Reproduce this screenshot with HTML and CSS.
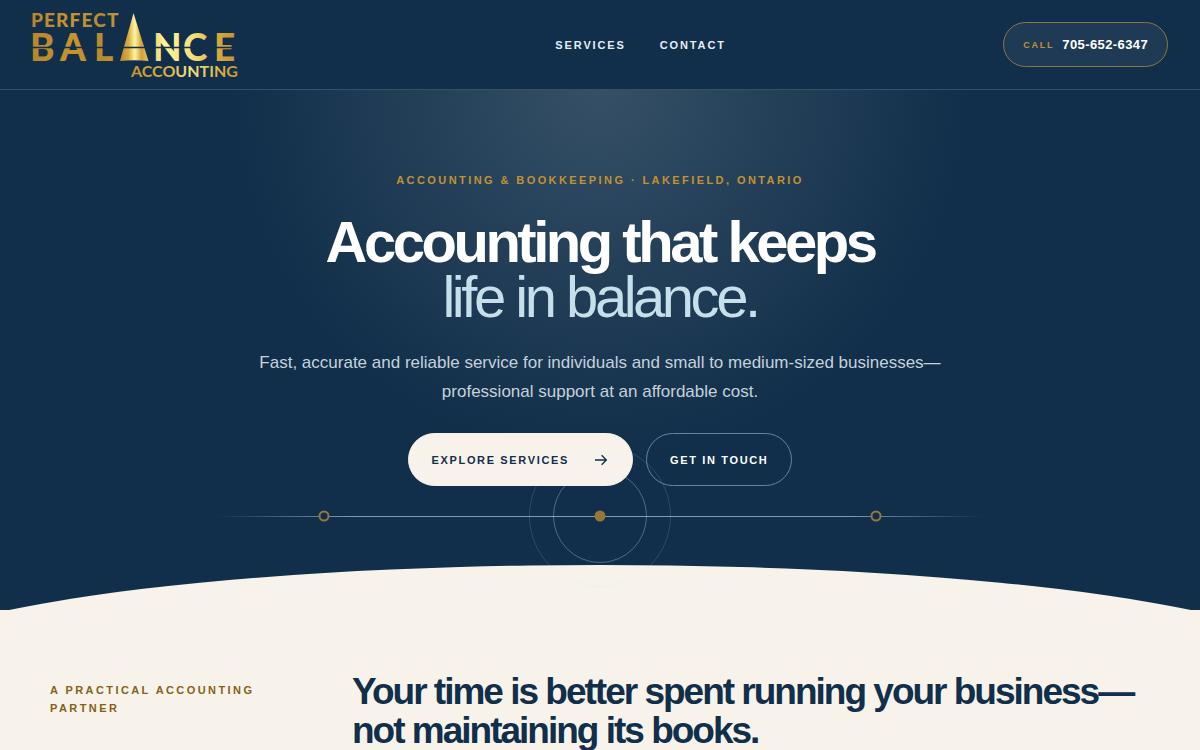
FILE: index.html
```html
<!DOCTYPE html>
<html lang="en">

<head>
    <meta charset="UTF-8">
    <meta name="viewport" content="width=device-width, initial-scale=1.0">
    <title>Perfect Balance Accounting</title>
    <link rel="stylesheet" href="styles.css">
</head>

<body>
    <header class="site-header">
        <a class="brand" href="#top" aria-label="Perfect Balance Accounting">
            <svg class="logo" viewBox="0 0 206 70" width="206" height="70">
                <defs>
                    <linearGradient id="gold" gradientUnits="userSpaceOnUse" x1="0" y1="0" x2="206" y2="0">
                        <stop offset="0" stop-color="#b8862b" />
                        <stop offset="0.2" stop-color="#c6952f" />
                        <stop offset="0.35" stop-color="#b98a2c" />
                        <stop offset="0.55" stop-color="#d9b04a" />
                        <stop offset="0.64" stop-color="#fff59a" />
                        <stop offset="0.78" stop-color="#f3e07c" />
                        <stop offset="0.9" stop-color="#d6a940" />
                        <stop offset="1" stop-color="#c08f2f" />
                    </linearGradient>
                    <linearGradient id="goldSmall" gradientUnits="userSpaceOnUse" x1="99" y1="0" x2="206" y2="0">
                        <stop offset="0" stop-color="#c6952f" />
                        <stop offset="0.35" stop-color="#d9b148" />
                        <stop offset="0.55" stop-color="#f5e37c" />
                        <stop offset="1" stop-color="#c6952f" />
                    </linearGradient>
                    <linearGradient id="peak" x1="0" y1="0" x2="1" y2="0">
                        <stop offset="0" stop-color="#c08a2a" />
                        <stop offset="0.3" stop-color="#d9aa42" />
                        <stop offset="0.52" stop-color="#fff6a0" />
                        <stop offset="0.75" stop-color="#d5a13a" />
                        <stop offset="1" stop-color="#e6c158" />
                    </linearGradient>
                </defs>
                <text class="logo-top" x="-1" y="17" fill="url(#gold)">PERFECT</text>
                <text class="logo-main" x="-2 28 62 121 151 182" y="51" fill="url(#gold)">BALNCE</text>
                <path d="M101.500 3L116.500 51Q102 49.500 88 51z" fill="url(#peak)" />
                <path class="logo-cut" d="M0 37.500H206" />
                <text class="logo-sub" x="99" y="67" fill="url(#goldSmall)">ACCOUNTING</text>
            </svg>
        </a>
        <nav class="nav">
            <a href="#services">Services</a>
            <a href="#contact">Contact</a>
        </nav>
        <a class="call" href="tel:7056526347"><span>Call</span><strong>705-652-6347</strong></a>
    </header>

    <main id="top">
        <section class="hero">
            <div class="orbit" aria-hidden="true">
                <i class="ring ring-outer"></i>
                <i class="ring ring-inner"></i>
                <i class="node node-left"></i>
                <i class="node node-center"></i>
                <i class="node node-right"></i>
            </div>
            <div class="hero-copy">
                <p class="eyebrow">Accounting &amp; Bookkeeping · Lakefield, Ontario</p>
                <h1>Accounting that keeps<br><em>life in balance.</em></h1>
                <p class="lead">Fast, accurate and reliable service for individuals and small to medium-sized businesses—professional support at an affordable cost.</p>
                <div class="actions">
                    <a class="btn btn-light" href="#services">Explore services
                        <svg viewBox="0 0 24 24" width="16" height="16" fill="none" stroke="currentColor" stroke-width="2"><path d="M3 12h17M13 5l7 7-7 7" /></svg>
                    </a>
                    <a class="btn btn-line" href="#contact">Get in touch</a>
                </div>
            </div>
        </section>

        <section class="intro" id="services">
            <p class="eyebrow eyebrow-dark">A practical accounting partner</p>
            <h2>Your time is better spent running your business—not maintaining its books.</h2>
        </section>
    </main>
</body>

</html>
```
FILE: styles.css
```css
* {
    box-sizing: border-box;
}

body {
    margin: 0;
    background: #f7f3eb;
    color: #112e4a;
    font-family: "Liberation Sans", Arial, sans-serif;
    overflow-x: hidden;
}

a {
    color: inherit;
    text-decoration: none;
}

h1,
h2,
p {
    margin: 0;
}

/* header */
.site-header {
    display: flex;
    justify-content: space-between;
    align-items: center;
    height: 90px;
    padding: 0 32px;
    background: #112e4a;
    border-bottom: 1px solid #34506a;
    color: #fff;
}

.brand {
    width: 246px;
}

.logo {
    display: block;
    overflow: visible;
    font-family: Lato, sans-serif;
}

.logo-top {
    font-size: 19px;
    font-weight: 900;
    letter-spacing: 0.06em;
}

.logo-main {
    font-size: 37px;
    font-weight: 900;
}

.logo-sub {
    font-size: 16px;
    font-weight: 700;
}

.logo-cut {
    stroke: #112e4a;
    stroke-width: 1.5;
}

.nav {
    display: flex;
    gap: 34px;
    color: #e4eff5;
    font-size: 11px;
    font-weight: 700;
    line-height: 14px;
    letter-spacing: 0.17em;
    text-transform: uppercase;
}

.call {
    display: flex;
    align-items: center;
    gap: 8px;
    height: 45px;
    padding: 0 19px;
    border: 1px solid #8b7740;
    border-radius: 24px;
    background: #1f3a54;
    font-size: 13px;
    letter-spacing: 0.03em;
}

.call span {
    color: #c39231;
    font-size: 9px;
    font-weight: 700;
    letter-spacing: 0.2em;
    text-transform: uppercase;
}

/* hero */
.hero {
    position: relative;
    min-height: 520px;
    padding: 84px 24px 124px;
    overflow: hidden;
    background: radial-gradient(circle at 50% 0, #355066 0, #112e4a 370px);
    color: #fff;
    text-align: center;
}

.hero::after {
    content: "";
    position: absolute;
    left: -10%;
    bottom: -165px;
    width: 120%;
    height: 210px;
    border-radius: 50%;
    background: #f7f3eb;
}

.hero-copy {
    position: relative;
    z-index: 2;
}

.eyebrow {
    color: #c39231;
    font-size: 11px;
    font-weight: 700;
    line-height: 18px;
    letter-spacing: 0.22em;
    text-transform: uppercase;
}

.hero .eyebrow {
    line-height: 13px;
}

h1 {
    margin-top: 27px;
    font-size: 58px;
    line-height: 55px;
    letter-spacing: -0.06em;
}

h1 em {
    color: #c7dfeb;
    font-style: normal;
    font-weight: 400;
}

.lead {
    max-width: 690px;
    margin: 24px auto 0;
    color: #c4d2dc;
    font-size: 17px;
    line-height: 29px;
}

.actions {
    display: flex;
    justify-content: center;
    gap: 13px;
    margin-top: 27px;
}

.btn {
    display: flex;
    align-items: center;
    gap: 24px;
    height: 53px;
    padding: 0 23px;
    border: 1px solid #69839a;
    border-radius: 27px;
    font-size: 11px;
    font-weight: 700;
    letter-spacing: 0.15em;
    text-transform: uppercase;
}

.btn-light {
    border-color: #f7f3eb;
    background: #f7f3eb;
    color: #112e4a;
}

/* balance beam behind the buttons */
.orbit {
    position: absolute;
    z-index: 1;
    left: 18%;
    right: 18%;
    bottom: 93px;
    height: 1px;
    background: linear-gradient(90deg, transparent, #7f9db2 18%, #7f9db2 82%, transparent);
}

.ring,
.node {
    position: absolute;
    top: 0;
    left: 50%;
    border-radius: 50%;
    transform: translate(-50%, -50%);
}

.ring-inner {
    width: 94px;
    height: 94px;
    border: 1px solid rgba(199, 223, 235, 0.35);
}

.ring-outer {
    width: 142px;
    height: 142px;
    border: 1px solid rgba(199, 223, 235, 0.16);
}

.node {
    width: 11px;
    height: 11px;
    border: 2px solid #957837;
    background: #112e4a;
}

.node-left {
    left: 14%;
}

.node-center {
    background: #957837;
}

.node-right {
    left: 86%;
}

/* intro */
.intro {
    display: grid;
    grid-template-columns: 252px 1fr;
    gap: 50px;
    padding: 62px 50px 80px;
}

.eyebrow-dark {
    margin-top: 9px;
    color: #866019;
}

h2 {
    font-size: 37px;
    line-height: 39px;
    letter-spacing: -2px;
}
```
